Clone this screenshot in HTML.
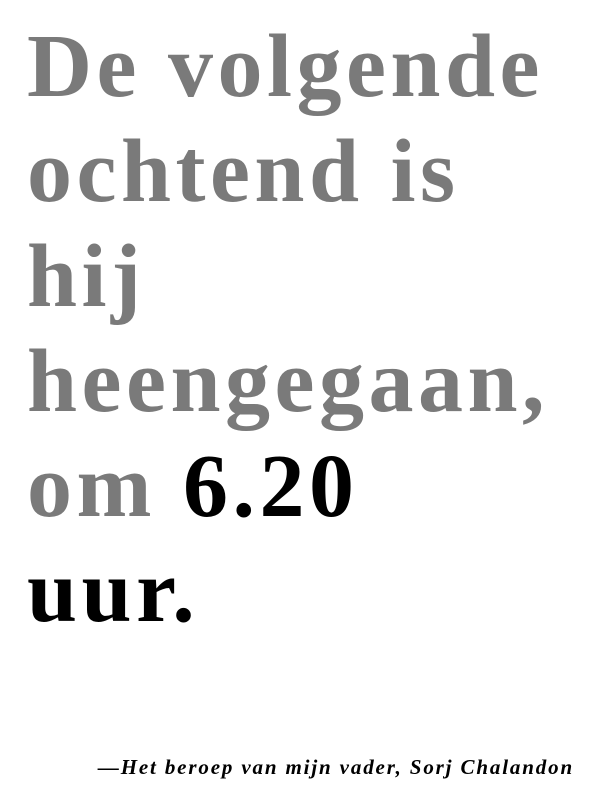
<!DOCTYPE html>
<html><head><meta charset="utf-8"><style>
html,body{margin:0;padding:0;background:#fff;width:600px;height:800px;overflow:hidden}
.q{position:absolute;left:27px;top:14px;font-family:"Liberation Serif",serif;font-weight:bold;font-size:90px;line-height:105px;color:#7a7a7a;letter-spacing:4.5px}
.q b{color:#000}
.a{position:absolute;right:26px;top:755px;font-family:"Liberation Serif",serif;font-weight:bold;font-style:italic;font-size:21px;color:#000;letter-spacing:1.85px;white-space:nowrap}
</style></head><body>
<div class="q">De volgende<br>ochtend is<br>hij<br>heengegaan,<br>om <b>6.20</b><br><b>uur.</b></div>
<div class="a">—Het beroep van mijn vader, Sorj Chalandon</div>
</body></html>
